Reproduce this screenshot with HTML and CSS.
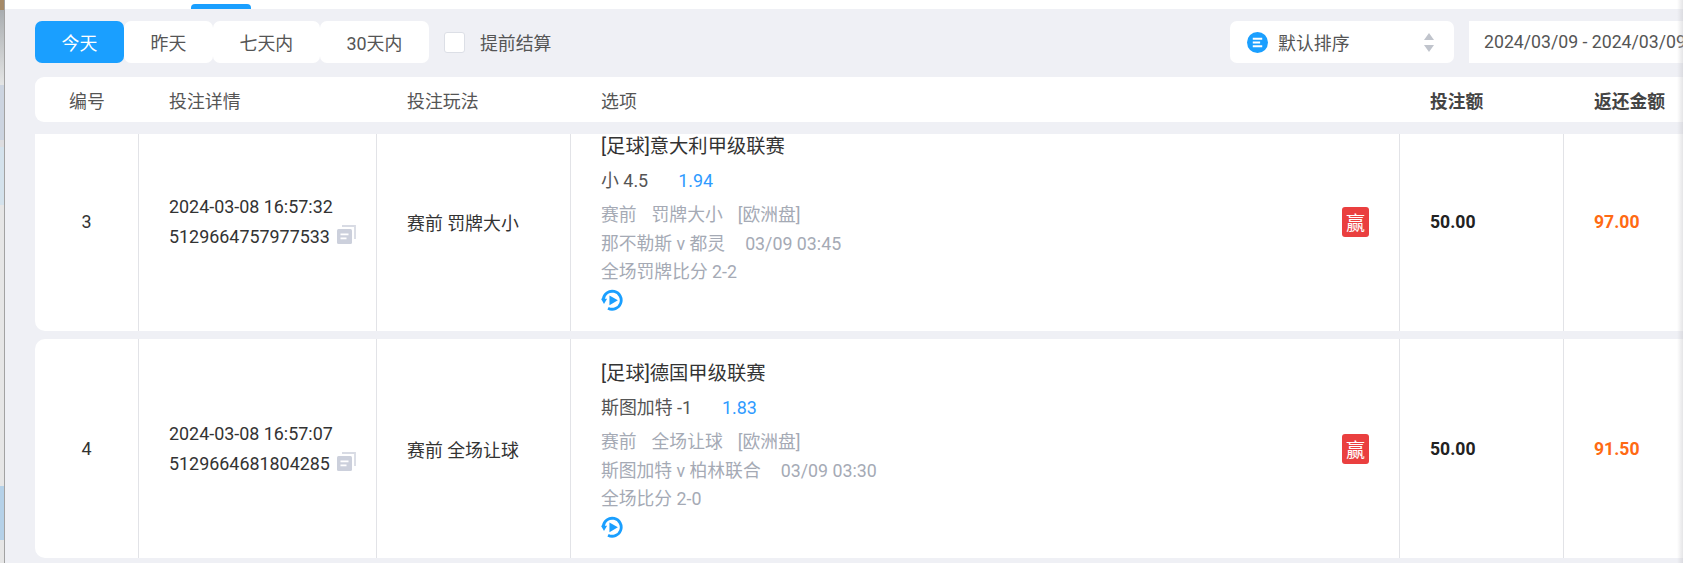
FILE: index.html
```html
<!DOCTYPE html>
<html lang="zh-CN">
<head>
<meta charset="utf-8">
<title>投注记录</title>
<link rel="stylesheet" href="styles.css">
</head>
<body>
<div class="app">
  <aside class="edge">
    <div class="edge-a"></div>
    <div class="edge-b"></div>
    <div class="edge-c"></div>
    <div class="edge-d"></div>
    <div class="edge-e"></div>
    <div class="edge-f"></div>
    <div class="edge-g"></div>
    <div class="edge-f edge-grow"></div>
  </aside>
  <main class="main">
    <div class="topbar"><span class="tab-mark"></span></div>
    <div class="content">
      <div class="filters">
        <div class="range">
          <button class="range-btn is-active">今天</button>
          <button class="range-btn">昨天</button>
          <button class="range-btn">七天内</button>
          <button class="range-btn">30天内</button>
        </div>
        <label class="early"><span class="checkbox"></span><span>提前结算</span></label>
        <div class="sort">
          <svg class="sort-icon" viewBox="0 0 20 20"><circle cx="10" cy="10" r="10" fill="#1a9fff"/><path d="M5.5 5.5h9v1.8h-9zM5.5 9.1h7v1.8h-7zM5.5 12.7h9v1.8h-9z" fill="#fff"/></svg>
          <span class="sort-text">默认排序</span>
          <span class="carets"><i class="caret-up"></i><i class="caret-down"></i></span>
        </div>
        <div class="date">2024/03/09 - 2024/03/09</div>
      </div>
      <div class="thead">
        <div class="th th-center">编号</div>
        <div class="th">投注详情</div>
        <div class="th">投注玩法</div>
        <div class="th">选项</div>
        <div class="th th-bold">投注额</div>
        <div class="th th-bold">返还金额</div>
      </div>
      <div class="list">
        <div class="rows">
          <div class="row">
            <div class="cell cell-center">3</div>
            <div class="cell cell-detail">
              <div>2024-03-08 16:57:32</div>
              <div class="bet-id">5129664757977533
                <svg class="copy" viewBox="0 0 19 19"><path d="M5 1h13v13" fill="none" stroke="#d8dbe4" stroke-width="1.8"/><rect x="0" y="4" width="15" height="15" rx="1.5" fill="#ccd0dc"/><path d="M3.5 8.5h8v1.8h-8zM3.5 12.5h6v1.8h-6z" fill="#fff"/></svg>
              </div>
            </div>
            <div class="cell">赛前 罚牌大小</div>
            <div class="cell cell-option">
              <div class="option">
                <div class="title">[足球]意大利甲级联赛</div>
                <div class="pick"><span>小 4.5</span><span class="odds">1.94</span></div>
                <div class="muted"><span class="sp">赛前</span><span class="sp">罚牌大小</span><span>[欧洲盘]</span></div>
                <div class="muted"><span class="sp-wide">那不勒斯 v 都灵</span><span>03/09 03:45</span></div>
                <div class="muted">全场罚牌比分 2-2</div>
                <svg class="replay" viewBox="0 0 24 24"><path d="M2.4 11A9.6 9.6 0 1 1 7.5 20.5" fill="none" stroke="#1a9fff" stroke-width="3"/><path d="M0 10.5 6.5 10.5 3.2 16z" fill="#1a9fff"/><path d="M9 6.8 18 12 9 17.2z" fill="#1a9fff"/></svg>
              </div>
              <span class="badge">赢</span>
            </div>
            <div class="cell cell-amount">50.00</div>
            <div class="cell cell-return">97.00</div>
          </div>
          <div class="row">
            <div class="cell cell-center">4</div>
            <div class="cell cell-detail">
              <div>2024-03-08 16:57:07</div>
              <div class="bet-id">5129664681804285
                <svg class="copy" viewBox="0 0 19 19"><path d="M5 1h13v13" fill="none" stroke="#d8dbe4" stroke-width="1.8"/><rect x="0" y="4" width="15" height="15" rx="1.5" fill="#ccd0dc"/><path d="M3.5 8.5h8v1.8h-8zM3.5 12.5h6v1.8h-6z" fill="#fff"/></svg>
              </div>
            </div>
            <div class="cell">赛前 全场让球</div>
            <div class="cell cell-option">
              <div class="option">
                <div class="title">[足球]德国甲级联赛</div>
                <div class="pick"><span>斯图加特 -1</span><span class="odds">1.83</span></div>
                <div class="muted"><span class="sp">赛前</span><span class="sp">全场让球</span><span>[欧洲盘]</span></div>
                <div class="muted"><span class="sp-wide">斯图加特 v 柏林联合</span><span>03/09 03:30</span></div>
                <div class="muted">全场比分 2-0</div>
                <svg class="replay" viewBox="0 0 24 24"><path d="M2.4 11A9.6 9.6 0 1 1 7.5 20.5" fill="none" stroke="#1a9fff" stroke-width="3"/><path d="M0 10.5 6.5 10.5 3.2 16z" fill="#1a9fff"/><path d="M9 6.8 18 12 9 17.2z" fill="#1a9fff"/></svg>
              </div>
              <span class="badge">赢</span>
            </div>
            <div class="cell cell-amount">50.00</div>
            <div class="cell cell-return">91.50</div>
          </div>
        </div>
      </div>
    </div>
    <div class="shade"></div>
  </main>
</div>
</body>
</html>
```
FILE: styles.css
```css
* { box-sizing: border-box; }
html, body { margin: 0; height: 100%; overflow: hidden; }
body {
  font-family: Roboto, "Noto Sans CJK SC", sans-serif;
  font-size: 17.9px;
  color: #333;
  background: #eff0f5;
}
.app { display: flex; height: 563px; width: 1683px; }

/* sliver of the window behind */
.edge {
  flex: 0 0 5px;
  display: flex;
  flex-direction: column;
  border-right: 1px solid #a2a2a2;
}
.edge-a { height: 10px; background: #a58a68; }
.edge-b { height: 75px; background: linear-gradient(#a9adb0, #e4e5e5); }
.edge-c { height: 55px; background: #ccd4e0; }
.edge-d { height: 7px; background: #dddde0; }
.edge-e { height: 58px; background: #d4e2ec; }
.edge-f { height: 281px; background: #e6e6e6; }
.edge-g { height: 54px; background: #b5d1e8; }
.edge-grow { height: auto; flex: 1; }

.main {
  position: relative;
  flex: 1;
  min-width: 0;
  display: flex;
  flex-direction: column;
  overflow: hidden;
}
.shade {
  position: absolute;
  top: 0;
  right: 0;
  bottom: 0;
  width: 6px;
  background: linear-gradient(to right, rgba(190,190,195,0), rgba(190,190,195,.4));
}
.topbar {
  flex: 0 0 9px;
  background: #fff;
  padding-left: 186px;
  display: flex;
  align-items: flex-end;
}
.tab-mark {
  width: 60px;
  height: 5px;
  background: #1a9fff;
  border-radius: 4px 4px 0 0;
}
.content {
  flex: 1;
  min-height: 0;
  padding: 12px 0 0 30px;
  display: flex;
  flex-direction: column;
}

/* filter bar */
.filters { display: flex; align-items: center; height: 42px; flex: none; }
.range { display: flex; height: 100%; }
.range-btn {
  border: 0;
  font: inherit;
  color: #555;
  background: #fff;
  border-radius: 7px;
  padding: 0 26.6px;
}
.range-btn.is-active { background: #1a9fff; color: #fff; }
.early { display: flex; align-items: center; gap: 15px; margin-left: 15px; color: #555; }
.checkbox {
  width: 21px;
  height: 21px;
  background: #fff;
  border: 1px solid #dcdfe6;
  border-radius: 3px;
}
.sort {
  margin-left: auto;
  width: 224px;
  height: 100%;
  background: #fff;
  border-radius: 7px;
  display: flex;
  align-items: center;
  padding-left: 17px;
  color: #555;
}
.sort-icon { width: 21px; height: 21px; flex: none; }
.sort-text { margin-left: 10px; }
.carets {
  margin-left: auto;
  margin-right: 20px;
  display: flex;
  flex-direction: column;
  gap: 5px;
}
.caret-up, .caret-down {
  display: block;
  width: 0;
  height: 0;
  border-left: 5px solid transparent;
  border-right: 5px solid transparent;
}
.caret-up { border-bottom: 7px solid #c0c4cc; }
.caret-down { border-top: 7px solid #c0c4cc; }
.date {
  flex: 0 0 214px;
  margin-left: 15px;
  height: 100%;
  background: #fff;
  padding-left: 15px;
  display: flex;
  align-items: center;
  white-space: nowrap;
  overflow: hidden;
  color: #555;
  font-size: 17.7px;
}

/* table */
.thead, .row {
  display: grid;
  grid-template-columns: 104px 238px 194px 829px 164px 119px;
}
.thead {
  flex: none;
  height: 45px;
  margin-top: 14px;
  background: #fff;
  border-radius: 9px 0 0 9px;
  align-items: center;
  color: #555;
}
.th { padding-left: 30px; }
.th-center { padding-left: 0; text-align: center; }
.th-bold { font-weight: 700; color: #444; font-size: 17.8px; }
.list { flex: 1; min-height: 0; margin-top: 12px; overflow: hidden; }
.rows { margin-top: -22px; display: flex; flex-direction: column; gap: 8px; }
.row {
  height: 219px;
  background: #fff;
  border-radius: 10px 0 0 10px;
}
.cell {
  border-right: 1px solid #e2e3e7;
  padding-left: 30px;
  display: flex;
  align-items: center;
}
.cell:last-child { border-right: 0; }
.cell-center { padding-left: 0; justify-content: center; }
.cell-detail { flex-direction: column; align-items: flex-start; justify-content: center; line-height: 29.5px; }
.bet-id { display: flex; align-items: center; gap: 7px; }
.copy { width: 19px; height: 19px; flex: none; margin-bottom: 3px; }
.cell-option { justify-content: space-between; padding-right: 30px; }
.option { align-self: flex-start; padding-top: 21px; }
.title { font-size: 19.3px; line-height: 28px; color: #333; }
.pick { display: flex; gap: 30px; line-height: 28px; margin-top: 6px; margin-bottom: 6px; color: #555; }
.odds { color: #2f9bff; }
.muted { line-height: 28.5px; color: #a5aab5; font-size: 17.8px; }
.sp { margin-right: 15px; }
.sp-wide { margin-right: 20px; }
.replay { display: block; width: 22.5px; height: 22.5px; margin-top: 2.25px; }
.badge {
  width: 27px;
  height: 30px;
  background: #ea3f3f;
  color: #fff;
  border-radius: 3px;
  display: flex;
  align-items: center;
  justify-content: center;
  font-size: 19px;
}
.cell-amount { font-weight: 700; color: #222; font-size: 17.6px; }
.cell-return { font-weight: 700; color: #ff6a13; font-size: 17.6px; }
```
